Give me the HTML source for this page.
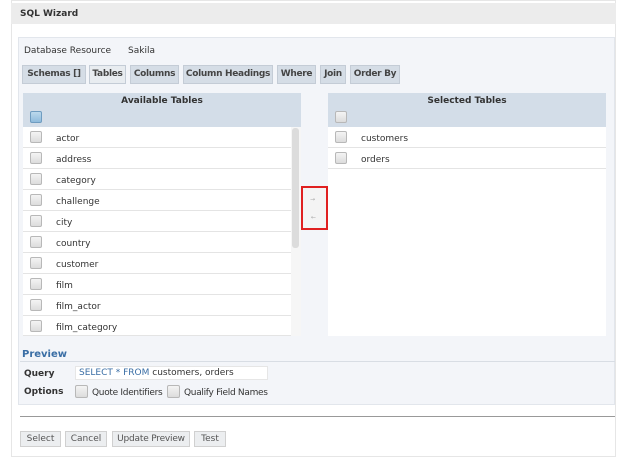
<!DOCTYPE html><html><head><style>
*{box-sizing:border-box;margin:0;padding:0}
body{width:624px;height:457px;background:#fff;font-family:"DejaVu Sans","Liberation Sans",sans-serif;font-size:9px;color:#333;position:relative;overflow:hidden;white-space:nowrap}
.a{position:absolute}
.tab{position:absolute;top:65px;height:19px;background:#d5dde6;border:1px solid #c4ccd6;font-weight:bold;color:#444;line-height:17px;text-align:center;letter-spacing:-0.3px}
.cb{position:absolute;width:12px;height:12px;border:1px solid #b8b8b8;border-radius:2px;background:linear-gradient(#f4f4f4,#dcdcdc)}
.row{position:absolute;left:0;width:268px;height:21px;border-bottom:1px solid #e4e4e4;background:#fff}
.row span{position:absolute;left:33px;top:7px}
.row .cb{left:7px;top:4px}
.btn{position:absolute;top:431px;height:16px;background:#eceef0;border:1px solid #d0d0d0;color:#555;line-height:15px;text-align:center}
</style></head><body>
<div class="a" style="left:11px;top:0;width:605px;height:457px;border:1px solid #e6e6e6;background:#fff"></div>
<div class="a" style="left:11px;top:3px;width:605px;height:21px;background:#ececec"></div>
<div class="a" style="left:20px;top:9px;font-weight:bold;color:#333">SQL Wizard</div>
<div class="a" style="left:18px;top:37px;width:597px;height:368px;background:#f3f5f9;border:1px solid #e2e6ec"></div>
<div class="a" style="left:24px;top:46px">Database Resource</div>
<div class="a" style="left:128px;top:46px">Sakila</div>
<div class="tab" style="left:22px;width:64px">Schemas []</div>
<div class="tab" style="left:89px;width:37px;background:#e8ecf0">Tables</div>
<div class="tab" style="left:130px;width:49px">Columns</div>
<div class="tab" style="left:183px;width:90px">Column Headings</div>
<div class="tab" style="left:277px;width:39px">Where</div>
<div class="tab" style="left:320px;width:26px">Join</div>
<div class="tab" style="left:350px;width:50px">Order By</div>

<div class="a" style="left:23px;top:93px;width:278px;height:243px;background:#fff">
<div class="a" style="left:0;top:0;width:278px;height:34px;background:#d3dde8"></div>
<div class="a" style="left:0;top:3px;width:278px;text-align:center;font-weight:bold">Available Tables</div>
<div class="cb" style="left:7px;top:18px;background:linear-gradient(#bcd8ec,#8fbbdc);border-color:#6f9cc0"></div>
<div class="row" style="top:34px"><div class="cb"></div><span>actor</span></div>
<div class="row" style="top:55px"><div class="cb"></div><span>address</span></div>
<div class="row" style="top:76px"><div class="cb"></div><span>category</span></div>
<div class="row" style="top:97px"><div class="cb"></div><span>challenge</span></div>
<div class="row" style="top:118px"><div class="cb"></div><span>city</span></div>
<div class="row" style="top:139px"><div class="cb"></div><span>country</span></div>
<div class="row" style="top:160px"><div class="cb"></div><span>customer</span></div>
<div class="row" style="top:181px"><div class="cb"></div><span>film</span></div>
<div class="row" style="top:202px"><div class="cb"></div><span>film_actor</span></div>
<div class="row" style="top:223px;height:20px"><div class="cb"></div><span>film_category</span></div>
<div class="a" style="left:268px;top:34px;width:10px;height:209px;background:#f6f6f6"></div>
<div class="a" style="left:269px;top:35px;width:7px;height:120px;background:#dcdcdc;border-radius:3px"></div>
</div>

<div class="a" style="left:301px;top:186px;width:27px;height:44px;border:2px solid #e02020;background:#f4f4f4"></div>
<div class="a" style="left:310px;top:196px;font-size:6px;color:#aaa">→</div>
<div class="a" style="left:311px;top:214px;font-size:6px;color:#aaa">←</div>

<div class="a" style="left:328px;top:93px;width:278px;height:243px;background:#fff">
<div class="a" style="left:0;top:0;width:278px;height:34px;background:#d3dde8"></div>
<div class="a" style="left:0;top:3px;width:278px;text-align:center;font-weight:bold">Selected Tables</div>
<div class="cb" style="left:7px;top:18px"></div>
<div class="row" style="top:34px;width:278px"><div class="cb"></div><span>customers</span></div>
<div class="row" style="top:55px;width:278px"><div class="cb"></div><span>orders</span></div>
</div>

<div class="a" style="left:22px;top:349px;font-weight:bold;color:#3a6ea5;font-size:10px">Preview</div>
<div class="a" style="left:20px;top:361px;width:595px;height:1px;background:#d8dde4"></div>
<div class="a" style="left:24px;top:369px;font-weight:bold">Query</div>
<div class="a" style="left:75px;top:366px;width:193px;height:14px;background:#fff;border:1px solid #e6e6e6;padding-left:3px;line-height:13px"><b style="color:#3a6ea5;font-weight:normal">SELECT * FROM</b> customers, orders</div>
<div class="a" style="left:24px;top:387px;font-weight:bold">Options</div>
<div class="cb" style="left:75px;top:385px;width:13px;height:13px"></div>
<div class="a" style="left:92px;top:388px;letter-spacing:-0.3px">Quote Identifiers</div>
<div class="cb" style="left:167px;top:385px;width:13px;height:13px"></div>
<div class="a" style="left:184px;top:388px;letter-spacing:-0.3px">Qualify Field Names</div>

<div class="a" style="left:20px;top:416px;width:595px;height:1px;background:#999"></div>
<div class="btn" style="left:20px;width:41px">Select</div>
<div class="btn" style="left:65px;width:42px">Cancel</div>
<div class="btn" style="left:112px;width:78px;letter-spacing:-0.2px">Update Preview</div>
<div class="btn" style="left:194px;width:32px">Test</div>
</body></html>
